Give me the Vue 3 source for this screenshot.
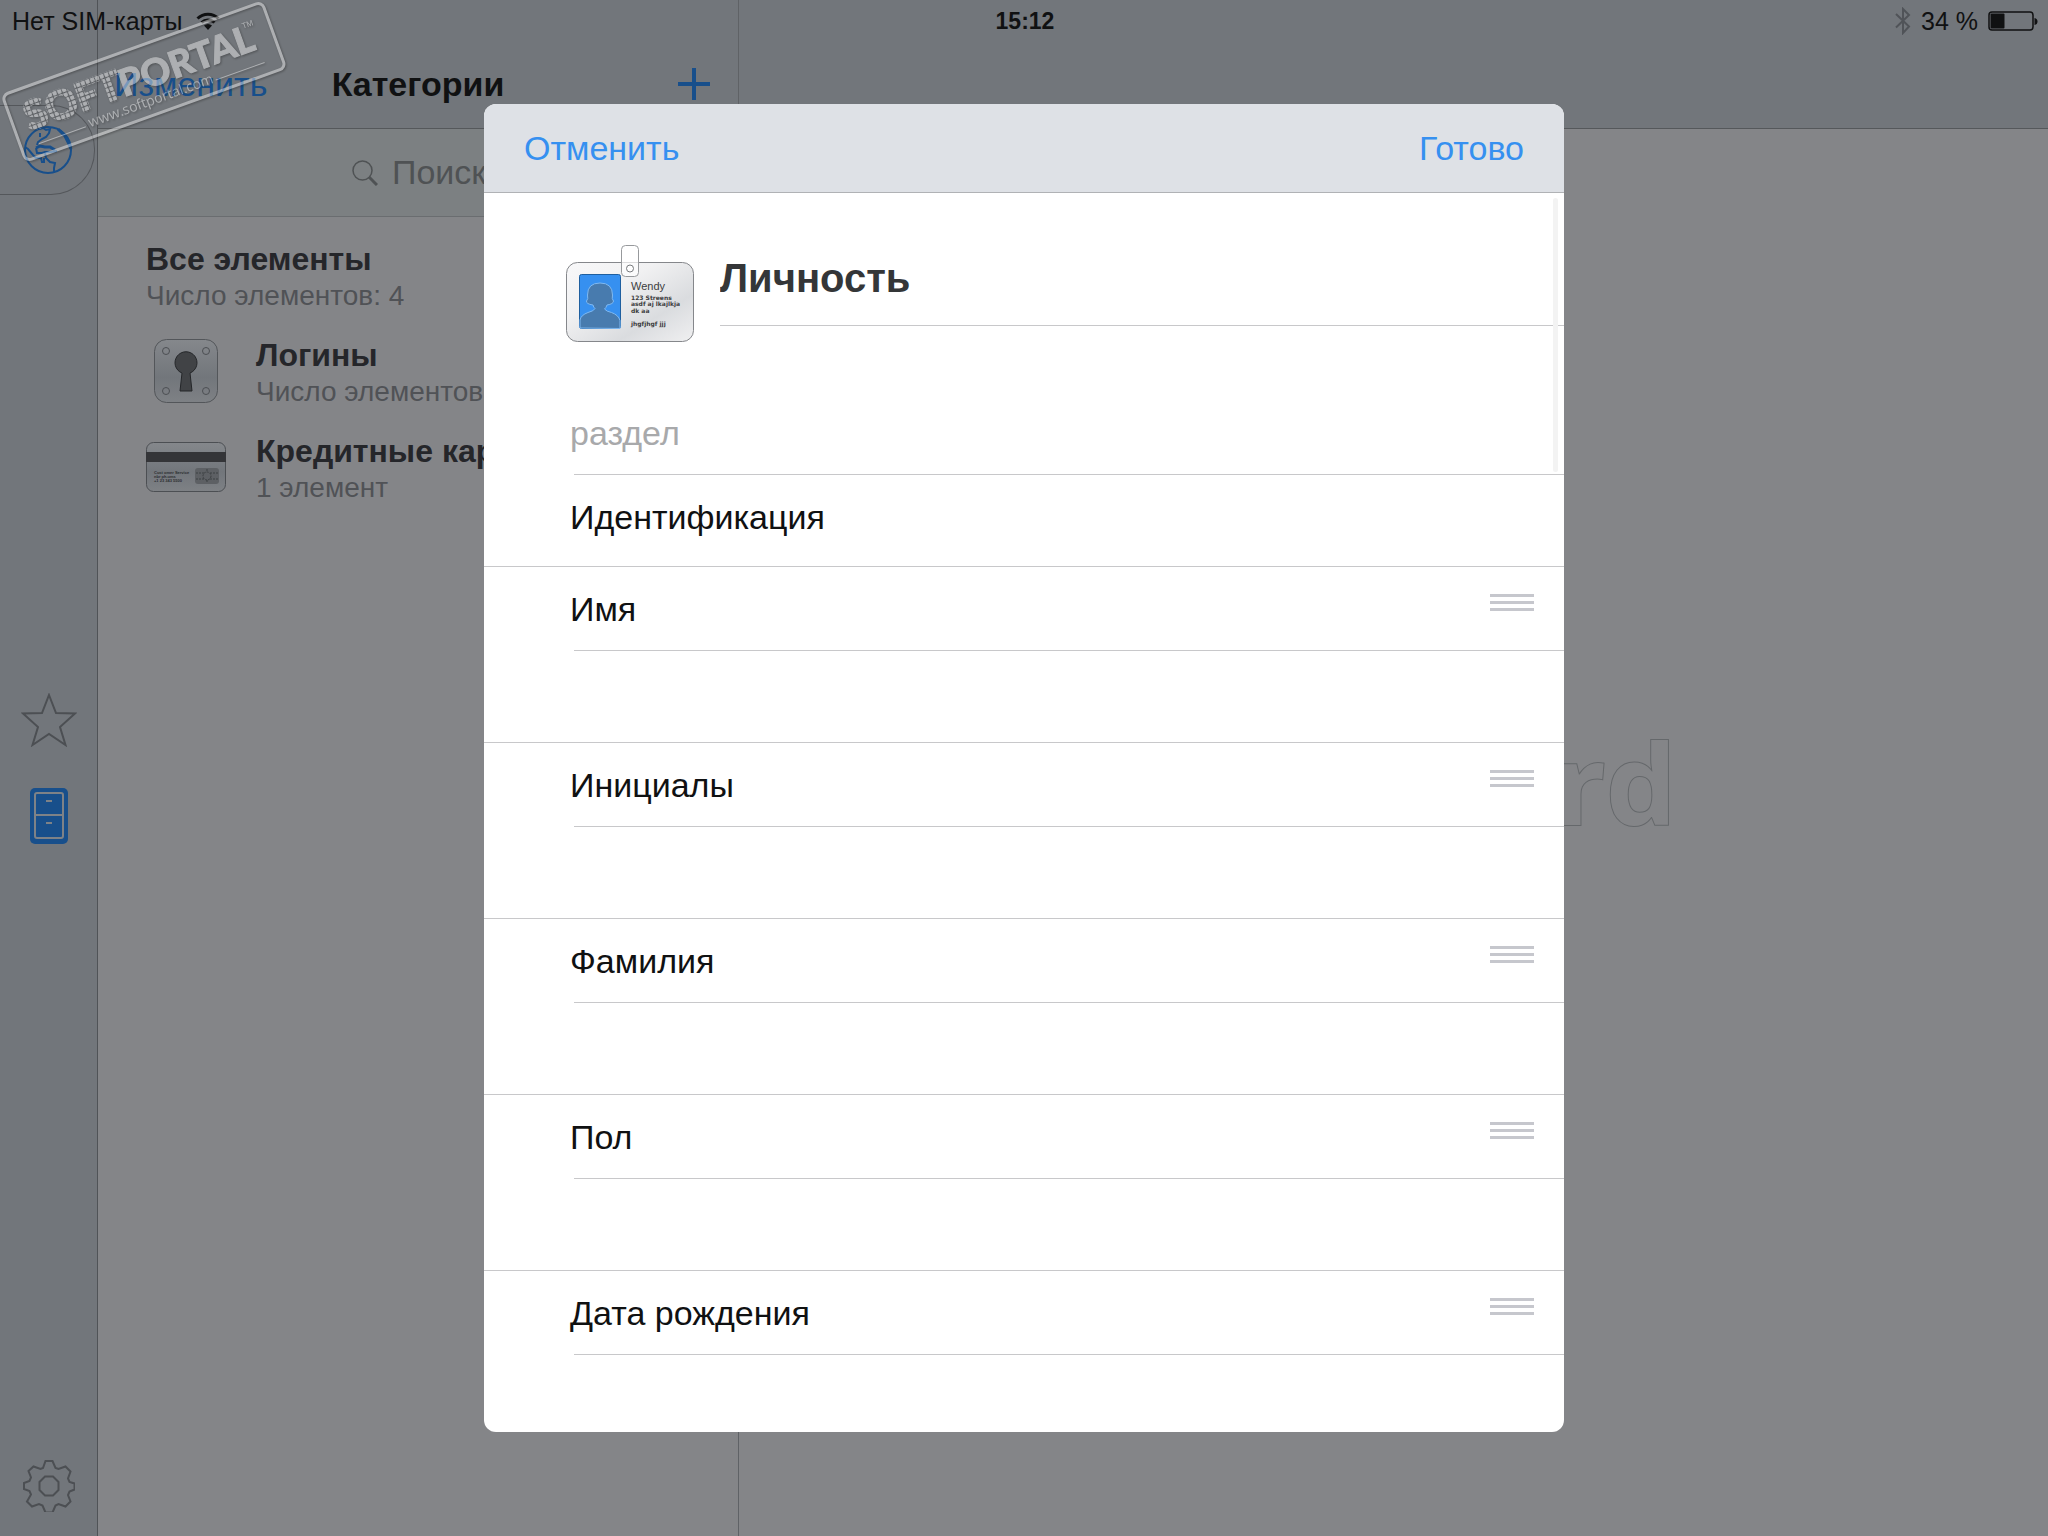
<script setup>
import { ref } from 'vue'

const search = ref('')
const title = ref('Личность')
const section = ref('')
const sectionName = ref('Идентификация')

const fields = ref([
  { id: 'first', label: 'Имя', value: '' },
  { id: 'initials', label: 'Инициалы', value: '' },
  { id: 'last', label: 'Фамилия', value: '' },
  { id: 'gender', label: 'Пол', value: '' },
  { id: 'birth', label: 'Дата рождения', value: '' },
])
</script>

<template>
  <div class="screen">
    <header class="status">
      <div class="status-side">
        <span>Нет SIM-карты</span>
        <svg class="wifi" viewBox="0 0 24 18" aria-hidden="true">
          <path d="M1.500 6.500a15 15 0 0 1 21 0" />
          <path d="M5.500 10.500a9.500 9.500 0 0 1 13 0" />
          <path class="solid" d="M8 13.500a6 6 0 0 1 8 0L12 18z" />
        </svg>
      </div>
      <strong class="time">15:12</strong>
      <div class="status-side right">
        <svg class="bluetooth" viewBox="0 0 16 28" aria-hidden="true">
          <path d="M1 7l13 12.500L8 26V2l6 6L1 20.500" />
        </svg>
        <span>34 %</span>
        <svg class="battery" viewBox="0 0 50 20" aria-hidden="true">
          <rect x="1" y="1" width="44" height="18" rx="3" fill="none" stroke="#101112" stroke-width="1.500" />
          <rect x="2.500" y="2.500" width="14" height="15" rx="1" fill="#101112" />
          <path d="M46.500 7q3 .5 3 3.500t-3 3.500z" fill="#101112" />
        </svg>
      </div>
    </header>

    <nav class="sidebar">
      <div class="vault">
        <button class="vault-tab" aria-label="Хранилище">
          <svg class="globe" viewBox="0 0 50 50" aria-hidden="true">
            <circle cx="25" cy="25" r="23" />
            <path d="M16 4l4-1 3 2 4-1-1 4-3 4-4 2-4 3-1 3M17 8v4" />
            <path class="land" d="M13 23l4-2 5 1 5 0 5 3" />
            <path class="land" d="M35 4l7 7 3 6 3 7" />
            <path d="M2 22l3 2 5 6 3 3 5 0 1 4 2 0 0-4" />
            <path d="M22 28l1 5 4 4 5 1-1 5 0 5M13 23l1 5 5 0 3-1 6 0 6-1" />
          </svg>
        </button>
      </div>
      <div class="side-items">
        <button class="side-button" aria-label="Избранное">
          <svg class="star" viewBox="0 0 56 54" aria-hidden="true">
            <path d="M28 2l7 18 19 .5-15 13.500 5.500 18L28 41 11.500 52 17 34 2 20.500 21 20z" />
          </svg>
        </button>
        <button class="side-button" aria-label="Категории">
          <svg class="cabinet" viewBox="0 0 38 56" aria-hidden="true">
            <rect width="38" height="56" rx="5" fill="#184f8b" stroke="none" />
            <rect x="5" y="5" width="28" height="45" rx="2" />
            <path d="M5 27h28M16 13h6M16 35h6" />
          </svg>
        </button>
      </div>
      <button class="side-button settings" aria-label="Настройки">
        <svg class="gear" viewBox="0 0 52 52" aria-hidden="true">
          <path
            d="M22.500 1h7l3 7 3 1 7-2.500 5 5-2.500 7 1.500 3.500 5 1.500v6l-5 2-1.500 3.500 2.500 6.500-5 5-7-2.500-3 1.500-3 7h-7l-3-7-3.500-1.500-7 2.500-5-5L8 34.500 6.500 31 1 29v-6l5.500-2L8 17.500 5.500 11l5-4.500 7 2.500 2.500-1z" />
          <path d="M22 16.500h8l5.500 5.500v8L30 35.500h-8L16.500 30v-8z" />
        </svg>
      </button>
    </nav>

    <aside class="categories">
      <div class="toolbar">
        <button class="link edit">Изменить</button>
        <h1>Категории</h1>
        <button class="add" aria-label="Добавить">
          <svg viewBox="0 0 32 32" aria-hidden="true">
            <path d="M16 0v32M0 16h32" />
          </svg>
        </button>
      </div>
      <label class="search">
        <svg viewBox="0 0 26 26" aria-hidden="true">
          <circle cx="10.500" cy="10.500" r="9.500" stroke-width="1.500" />
          <path d="M17 17l8 8" stroke-width="3" />
        </svg>
        <input v-model="search" type="text" placeholder="Поиск" aria-label="Поиск">
      </label>
      <ul class="list">
        <li>
          <div class="names">
            <strong>Все элементы</strong>
            <span>Число элементов: 4</span>
          </div>
        </li>
        <li>
          <svg class="item-icon" viewBox="0 0 80 64" aria-hidden="true">
            <defs>
              <linearGradient id="plate" x1="0" y1="0" x2="0" y2="1">
                <stop offset="0" stop-color="#85888c" />
                <stop offset=".6" stop-color="#72767b" />
                <stop offset="1" stop-color="#7e8185" />
              </linearGradient>
            </defs>
            <rect x="8.500" y=".5" width="63" height="63" rx="12" fill="url(#plate)" stroke="#53565a" />
            <g fill="none" stroke="#4c4f53">
              <circle cx="20" cy="12" r="3.500" />
              <circle cx="60" cy="12" r="3.500" />
              <circle cx="20" cy="52" r="3.500" />
              <circle cx="60" cy="52" r="3.500" />
            </g>
            <path d="M36 34a11 11 0 1 1 8 0l2 18H34z" fill="#414346" stroke="#242629" />
          </svg>
          <div class="names">
            <strong>Логины</strong>
            <span>Число элементов: 3</span>
          </div>
        </li>
        <li>
          <svg class="item-icon" viewBox="0 0 80 50" aria-hidden="true">
            <rect x=".5" y=".5" width="79" height="49" rx="7" fill="url(#plate)" stroke="#4c4f53" />
            <rect y="10" width="80" height="10" fill="#343538" />
            <g class="card-text">
              <text x="8" y="32">Cust omer Service</text>
              <text x="8" y="36">nbr ph.ums</text>
              <text x="8" y="40">+1 23 343 5500</text>
            </g>
            <rect x="49" y="26" width="24" height="16" rx="3" fill="#5d6064" />
            <path d="M50 31h8M50 37h8M64 31h8M64 37h8M61 27v3M61 38v3" stroke="#3d4043" stroke-dasharray="2 1" />
            <circle cx="61" cy="34" r="4" fill="none" stroke="#3d4043" stroke-dasharray="2 1" />
          </svg>
          <div class="names">
            <strong>Кредитные карты</strong>
            <span>1 элемент</span>
          </div>
        </li>
      </ul>
    </aside>

    <main class="detail">
      <div class="toolbar"></div>
      <div class="empty">
        <span class="wordmark">1Password</span>
      </div>
    </main>

    <div class="overlay">
      <form class="modal" role="dialog" aria-label="Новый элемент" @submit.prevent>
        <header class="modal-bar">
          <button type="button" class="link">Отменить</button>
          <button type="submit" class="link">Готово</button>
        </header>
        <div class="modal-body">
          <div class="hero">
            <svg class="badge" viewBox="0 0 128 98" aria-hidden="true">
              <defs>
                <linearGradient id="paper" x1="0" y1="0" x2="1" y2="1">
                  <stop offset="0" stop-color="#f8f8f9" />
                  <stop offset=".35" stop-color="#f1f1f2" />
                  <stop offset=".7" stop-color="#dadcdf" />
                  <stop offset="1" stop-color="#f0f0f1" />
                </linearGradient>
              </defs>
              <rect x=".5" y="17.500" width="127" height="79" rx="11" fill="url(#paper)" stroke="#85878b" />
              <rect x="13.500" y="29.500" width="41" height="54" rx="2" fill="#3690f0" stroke="#1f5f9f" />
              <path
                d="M14 83V75q1-5 8-7.500 6-1.500 7-4-1.500-1-2-3.500-7-1-6.500-4 2-2 1-6 0-12 12.500-12t12.500 12q-1 4 1 6 0 3-6.500 4-1 3-2.500 4 2 2.500 7 3.500 7 2.500 8.500 8v8z"
                fill="#487bae" stroke="#7fb9f2" />
              <rect x="55.500" y=".5" width="17" height="31" rx="4" fill="#fff" fill-opacity=".7" stroke="#97999c" />
              <circle cx="64" cy="23.500" r="3.500" fill="#fff" stroke="#77797c" />
              <g fill="#3c3d40">
                <text class="badge-name" x="65" y="45">Wendy</text>
                <g class="badge-text">
                  <text x="65" y="55">123 Streens</text>
                  <text x="65" y="61">asdf aj lkajlkja</text>
                  <text x="65" y="68">dk aa</text>
                  <text x="65" y="81">jhgfjhgf jjj</text>
                </g>
              </g>
            </svg>
            <input v-model="title" class="title" type="text" aria-label="Название">
          </div>
          <div class="line-row">
            <input v-model="section" type="text" placeholder="раздел" aria-label="раздел">
          </div>
          <div class="section-name">
            <input v-model="sectionName" type="text" aria-label="Имя раздела">
          </div>
          <div v-for="field in fields" :key="field.id" class="field">
            <div class="line-row">
              <label :for="field.id">{{ field.label }}</label>
              <button type="button" class="handle" aria-label="Переместить">
                <i></i><i></i><i></i>
              </button>
            </div>
            <input :id="field.id" v-model="field.value" class="value" type="text">
          </div>
          <div class="scrollbar"></div>
        </div>
      </form>
    </div>

    <svg class="stamp" viewBox="0 0 290 166" aria-hidden="true">
      <defs>
        <pattern id="dots" width="5" height="5" patternUnits="userSpaceOnUse">
          <rect width="4" height="4" rx="1" fill="#fff" />
        </pattern>
      </defs>
      <g transform="translate(0 95) rotate(-19.800)">
        <rect x="2" y="1" width="276" height="70" rx="6" fill="none" stroke="#fff" stroke-width="3" />
        <text class="stamp-name dotted" x="16" y="44" fill="url(#dots)" stroke="url(#dots)">SOFT</text>
        <text class="stamp-name" x="116" y="44" stroke="#fff">PORTAL</text>
        <text class="stamp-tm" x="251" y="20">TM</text>
        <text class="stamp-url" x="74" y="61">www.softportal.com</text>
        <path d="M20 59h50M208 59h52" stroke="#fff" />
      </g>
    </svg>
  </div>
</template>

<style>
html,
body {
  margin: 0;
  background: #848588;
}
</style>

<style scoped>
.screen {
  position: relative;
  display: grid;
  grid-template-columns: 98px 641px 1fr;
  height: 100vh;
  overflow: hidden;
  font-family: "Liberation Sans", Arial, sans-serif;
  font-size: 34px;
  color: #101112;
}

.screen * {
  box-sizing: border-box;
}

button,
input {
  padding: 0;
  border: 0;
  background: none;
  font: inherit;
  color: inherit;
  outline: 0;
}

svg {
  display: block;
  flex: none;
}

.status {
  position: absolute;
  inset: 0 0 auto;
  z-index: 1;
  display: grid;
  grid-template-columns: 1fr auto 1fr;
  align-items: center;
  height: 42px;
  padding: 0 10px 0 12px;
  font-size: 25px;
}

.time {
  font-size: 23px;
}

.status-side {
  display: flex;
  align-items: center;
  gap: 14px;
}

.right {
  justify-content: flex-end;
  gap: 10px;
}

.wifi {
  width: 24px;
  height: 18px;
  fill: none;
  stroke: #101112;
  stroke-width: 3;
}

.wifi .solid {
  fill: #101112;
  stroke: none;
}

.bluetooth {
  width: 16px;
  height: 28px;
  fill: none;
  stroke: #505358;
  stroke-width: 2;
}

.battery {
  width: 50px;
  height: 20px;
}

.sidebar {
  display: grid;
  grid-template-rows: 1fr auto 1fr;
  background: #72767b;
  border-right: 1px solid #505357;
}

.vault {
  padding-top: 105px;
}

.vault-tab {
  display: flex;
  align-items: center;
  width: 95px;
  height: 90px;
  padding-left: 23px;
  border: 1px solid #54575b;
  border-left: 0;
  border-radius: 0 44px 44px 0;
}

.globe {
  width: 50px;
  height: 50px;
  fill: none;
  stroke: #184f8b;
  stroke-width: 2;
}

.globe .land {
  stroke-width: 3;
}

.side-button {
  display: flex;
  align-items: center;
  justify-content: center;
  width: 100%;
  height: 96px;
}

.settings {
  align-self: end;
  height: 100px;
}

.star {
  width: 56px;
  height: 54px;
}

.gear {
  width: 52px;
  height: 52px;
}

.star,
.gear {
  fill: none;
  stroke: #4c4f53;
  stroke-width: 2;
}

.cabinet {
  width: 38px;
  height: 56px;
  fill: none;
  stroke: #7e8287;
  stroke-width: 2;
}

.categories {
  border-right: 1px solid #5f6266;
}

.toolbar {
  display: grid;
  grid-template-columns: 1fr auto 1fr;
  align-items: center;
  height: 129px;
  padding: 40px 16px 0;
  background: #72767b;
  border-bottom: 1px solid #55585b;
}

.toolbar h1 {
  margin: 0;
  font-size: 34px;
}

.link {
  color: #3690f0;
}

.edit {
  justify-self: start;
  color: #184f8b;
}

.add {
  justify-self: end;
  margin-right: 12px;
}

.add svg {
  width: 32px;
  height: 32px;
  stroke: #184f8b;
  stroke-width: 4;
}

.search {
  display: flex;
  align-items: center;
  justify-content: center;
  gap: 14px;
  height: 88px;
  background: #7c8082;
  border-bottom: 1px solid #6a6d70;
  color: #4f5254;
}

.search svg {
  width: 26px;
  height: 26px;
  fill: none;
  stroke: currentColor;
}

.search input {
  width: 92px;
}

.search input::placeholder {
  color: inherit;
  opacity: 1;
}

.list {
  margin: 0;
  padding: 12px 0 0 48px;
  list-style: none;
}

.list li {
  display: flex;
  align-items: center;
  gap: 30px;
  height: 96px;
}

.item-icon {
  width: 80px;
  margin-bottom: 4px;
}

.names {
  display: flex;
  flex-direction: column;
  gap: 1px;
  line-height: 36px;
  white-space: nowrap;
}

.names strong {
  font-size: 32px;
  color: #25262a;
}

.names span {
  font-size: 28px;
  color: #505256;
}

.card-text {
  font-size: 4px;
  font-weight: bold;
  fill: #2c2e31;
}

.detail {
  display: flex;
  flex-direction: column;
}

.empty {
  flex: 1;
  display: flex;
  align-items: center;
  justify-content: center;
  padding: 0 34px 102px 0;
}

.wordmark {
  font-family: "Open Sans", sans-serif;
  font-size: 112px;
  font-weight: 700;
  color: #848588;
  -webkit-text-stroke: 2px #65686b;
  paint-order: stroke fill;
}

.overlay {
  position: absolute;
  inset: 0;
  z-index: 2;
  display: flex;
  justify-content: center;
  padding: 104px 24px;
}

.modal {
  display: flex;
  flex-direction: column;
  width: 100%;
  max-width: 1080px;
  overflow: hidden;
  border-radius: 12px;
  background: #fff;
}

.modal-bar {
  display: flex;
  align-items: center;
  justify-content: space-between;
  flex: none;
  height: 89px;
  padding: 0 40px;
  background: #dee1e6;
  border-bottom: 1px solid #b0b2b5;
}

.modal-body {
  position: relative;
  flex: 1;
  min-height: 0;
  overflow: hidden;
}

.hero {
  display: flex;
  align-items: flex-start;
  gap: 26px;
  height: 198px;
  padding: 38px 0 0 82px;
}

.badge {
  width: 128px;
  height: 98px;
  margin-top: 14px;
}

.badge-name {
  font-size: 11px;
}

.badge-text {
  font-family: "DejaVu Sans", sans-serif;
  font-size: 6px;
  font-weight: bold;
}

.title {
  flex: 1;
  min-width: 0;
  height: 95px;
  border-bottom: 1px solid #c8c8ca;
  font-size: 40px;
  font-weight: bold;
  color: #343638;
}

.line-row {
  display: flex;
  align-items: center;
  justify-content: space-between;
  height: 84px;
  margin-left: 90px;
  padding-top: 2px;
  border-bottom: 1px solid #c8c8ca;
}

.line-row input,
.line-row label {
  flex: 1;
  min-width: 0;
  margin-left: -4px;
}

.line-row input::placeholder {
  color: #a8a9ab;
  opacity: 1;
}

.section-name {
  height: 92px;
  padding-left: 86px;
  border-bottom: 1px solid #c8c8ca;
}

.section-name input {
  width: 100%;
  height: 84px;
}

.field + .field {
  border-top: 1px solid #c8c8ca;
}

.handle {
  display: flex;
  flex-direction: column;
  gap: 4px;
  margin: 0 30px 14px 0;
}

.handle i {
  width: 44px;
  height: 3px;
  background: #c6c7cd;
}

.value {
  display: block;
  width: 100%;
  height: 91px;
  padding-left: 86px;
}

.scrollbar {
  position: absolute;
  top: 5px;
  right: 6px;
  width: 5px;
  height: 274px;
  border-radius: 3px;
  background: #f3f3f3;
}

.stamp {
  position: absolute;
  top: 0;
  left: 0;
  z-index: 1;
  width: 290px;
  height: 166px;
  fill: #fff;
  opacity: .42;
  pointer-events: none;
  filter: drop-shadow(1px 1px 1px #222);
}

.stamp-name {
  font-family: Lato, sans-serif;
  font-size: 37px;
  font-weight: 900;
}

.dotted {
  font-size: 40px;
  stroke-width: 2;
}

.stamp-tm {
  font-size: 8px;
}

.stamp-url {
  font-family: "Open Sans", sans-serif;
  font-size: 14px;
}
</style>
